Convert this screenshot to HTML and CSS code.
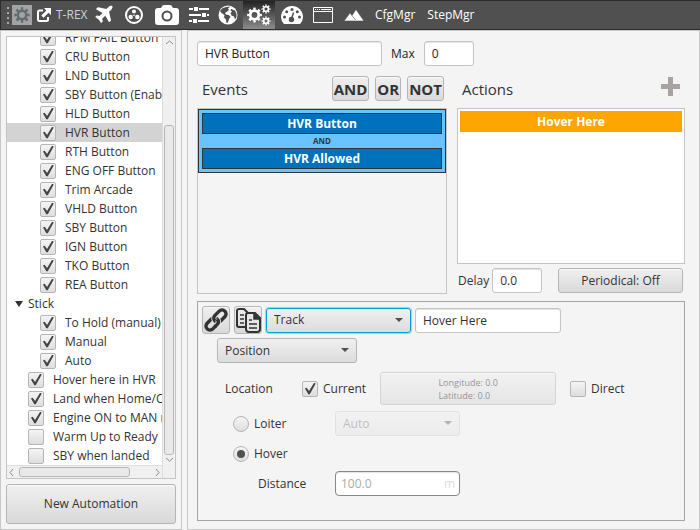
FILE: index.html
```html
<!DOCTYPE html>
<html lang="en">
<head>
<meta charset="utf-8">
<title>Automation</title>
<link rel="stylesheet" href="styles.css">
</head>
<body>
<header class="toolbar">
  <span class="grip"><i></i><i></i><i></i><i></i></span>
  <button class="tool settings" aria-label="Settings"><svg width="16" height="16" viewBox="0 0 16 16" fill="none" stroke="#5f6b70"><circle cx="8" cy="8" r="4.200" stroke-width="2.400"/><circle cx="8" cy="8" r="6.400" stroke-width="2.600" pathLength="16" stroke-dasharray="1" stroke-dashoffset=".5"/></svg></button>
  <button class="tool share" aria-label="Open"><svg width="16" height="16" viewBox="0 0 16 16"><path d="M7 3.500H3.500Q2 3.500 2 5V12.500Q2 14 3.500 14H10.500Q12 14 12 12.500V10" fill="none" stroke="#fff" stroke-width="2"/><path d="M8 1H15V8L12.500 5.700 7.500 10.700 5.300 8.500 10.300 3.500Z" fill="#fff"/></svg></button>
  <a class="brand" href="#">T-REX</a>
  <button class="tool w30" aria-label="Flight"><svg width="22" height="22" viewBox="0 0 1792 1792"><path fill="#fff" d="M1568 160q44 52 12 148t-108 172l-161 161 160 696q5 19-12 33l-128 96q-7 6-19 6-4 0-7-1-15-3-21-16l-279-508-259 259 53 194q5 17-8 31l-96 96q-9 9-23 9h-2q-15-2-24-13l-189-252-252-189q-11-7-13-23-1-13 9-25l96-97q9-9 23-9 6 0 8 1l194 53 259-259-508-279q-14-8-17-24-2-16 9-27l128-128q14-13 30-8l665 159 160-160q76-76 172-108t148 12z"/></svg></button>
  <button class="tool w30" aria-label="Controls"><svg width="20" height="20" viewBox="0 0 20 20"><circle cx="10" cy="10" r="8" fill="none" stroke="#fff" stroke-width="2"/><g fill="#fff"><circle cx="10" cy="6.500" r="2"/><circle cx="6.700" cy="12" r="2.200"/><circle cx="13.300" cy="12" r="2.200"/><circle cx="10" cy="10.300" r=".8"/></g></svg></button>
  <button class="tool w36" aria-label="Camera"><svg width="24" height="22" viewBox="0 0 24 22"><path fill="#fff" fill-rule="evenodd" d="M3 4H6L7.500 1.500Q8 1 9 1H15Q16 1 16.500 1.500L18 4H21Q24 4 24 7V18Q24 21 21 21H3Q0 21 0 18V7Q0 4 3 4ZM12 6.500A5.500 5.500 0 1 0 12 17.500A5.500 5.500 0 1 0 12 6.500Z"/><circle cx="12" cy="12" r="3.500" fill="#fff"/></svg></button>
  <button class="tool w28" aria-label="Sliders"><svg width="20" height="20" viewBox="0 0 20 20" fill="#fff"><path d="M0 3H20V5H0ZM0 9H20V11H0ZM0 15H20V17H0Z"/><path stroke="#505050" d="M4.500 1.500H9.500V6.500H4.500ZM12.500 7.500H17.500V12.500H12.500ZM3.500 13.500H8.500V18.500H3.500Z"/></svg></button>
  <button class="tool w30" aria-label="World"><svg width="20" height="20" viewBox="0 0 20 20"><circle cx="10" cy="10" r="9.500" fill="#fff"/><path fill="#505050" d="M8 2L12 1.500 10 3.500 11 5 8.500 7 7 8 8 9.500 11 10 12.500 12 11 14 10 17.500 8.500 18 8 14.500 6 12.500 6.500 10 3.500 8 2 6 4 3.500ZM13 4L17 5.500 18.500 9 18.500 12 17 14.500 16 11.500 13.500 10.500 12.500 8 14 6.500 12.500 5.500Z"/></svg></button>
  <button class="tool w32 active" aria-label="Automation"><svg width="24" height="22" viewBox="0 0 24 22" fill="none" stroke="#fff"><circle cx="7.500" cy="11" r="4.300" stroke-width="2.800"/><circle cx="7.500" cy="11" r="6.300" stroke-width="2.200" pathLength="16" stroke-dasharray="1" stroke-dashoffset=".5"/><circle cx="19" cy="5" r="2.400" stroke-width="1.700"/><circle cx="19" cy="5" r="3.800" stroke-width="1.500" pathLength="16" stroke-dasharray="1" stroke-dashoffset=".5"/><circle cx="19" cy="17" r="2.400" stroke-width="1.700"/><circle cx="19" cy="17" r="3.800" stroke-width="1.500" pathLength="16" stroke-dasharray="1" stroke-dashoffset=".5"/></svg></button>
  <button class="tool w34" aria-label="Dashboard"><svg width="22" height="20" viewBox="0 0 22 20"><path fill="#fff" d="M3 19Q0 16 0 12A11 11 0 0 1 22 12Q22 16 19 19Z"/><g fill="#505050"><circle cx="3.500" cy="12" r="1.500"/><circle cx="5.700" cy="6.700" r="1.500"/><circle cx="11" cy="4.500" r="1.500"/><circle cx="16.300" cy="6.700" r="1.500"/><circle cx="18.500" cy="12" r="1.500"/><circle cx="10.500" cy="14.500" r="2.700"/></g><path d="M10.500 14L12.500 7.500" stroke="#505050" stroke-width="1.500"/></svg></button>
  <button class="tool w28" aria-label="Window"><svg width="20" height="18" viewBox="0 0 20 18" fill="none" stroke="#fff"><path d="M.5 1.500H19.500V16.500H.5ZM.5 5.500H19.500"/><path d="M2 3.500H18" stroke-dasharray="1 1 1 1 1 1 20"/></svg></button>
  <button class="tool w34" aria-label="Terrain"><svg width="20" height="14" viewBox="0 0 20 14"><path fill="#fff" d="M0 13L6 5 8 7.500 12 1.500 20 13ZM8 7.500L11.500 12" stroke="#505050" stroke-width=".6"/></svg></button>
  <nav class="menus"><a href="#">CfgMgr</a><a href="#">StepMgr</a></nav>
</header>
<main class="split">
  <aside class="side">
    <div class="tree">
      <div class="rows">
        <label class="row deep"><input type="checkbox" class="check" checked>RPM FAIL Button</label>
        <label class="row deep"><input type="checkbox" class="check" checked>CRU Button</label>
        <label class="row deep"><input type="checkbox" class="check" checked>LND Button</label>
        <label class="row deep"><input type="checkbox" class="check" checked>SBY Button (Enabled)</label>
        <label class="row deep"><input type="checkbox" class="check" checked>HLD Button</label>
        <label class="row deep selected"><input type="checkbox" class="check" checked>HVR Button</label>
        <label class="row deep"><input type="checkbox" class="check" checked>RTH Button</label>
        <label class="row deep"><input type="checkbox" class="check" checked>ENG OFF Button</label>
        <label class="row deep"><input type="checkbox" class="check" checked>Trim Arcade</label>
        <label class="row deep"><input type="checkbox" class="check" checked>VHLD Button</label>
        <label class="row deep"><input type="checkbox" class="check" checked>SBY Button</label>
        <label class="row deep"><input type="checkbox" class="check" checked>IGN Button</label>
        <label class="row deep"><input type="checkbox" class="check" checked>TKO Button</label>
        <label class="row deep"><input type="checkbox" class="check" checked>REA Button</label>
        <div class="row group"><span class="twisty"></span>Stick</div>
        <label class="row deep"><input type="checkbox" class="check" checked>To Hold (manual)</label>
        <label class="row deep"><input type="checkbox" class="check" checked>Manual</label>
        <label class="row deep"><input type="checkbox" class="check" checked>Auto</label>
        <label class="row"><input type="checkbox" class="check" checked>Hover here in HVR</label>
        <label class="row"><input type="checkbox" class="check" checked>Land when Home/Cruise</label>
        <label class="row"><input type="checkbox" class="check" checked>Engine ON to MAN mode</label>
        <label class="row"><input type="checkbox" class="check">Warm Up to Ready</label>
        <label class="row"><input type="checkbox" class="check">SBY when landed</label>
      </div>
      <div class="vbar">
        <svg width="13" height="10" viewBox="0 0 13 10"><path d="M3 7L6.500 4 10 7"/></svg>
        <span class="vtrack"><span class="vthumb"></span></span>
        <svg width="13" height="10" viewBox="0 0 13 10"><path d="M3 3L6.500 6 10 3"/></svg>
      </div>
      <div class="hbar">
        <svg width="11" height="13" viewBox="0 0 11 13"><path d="M6 3L3 6.500 6 10"/></svg>
        <span class="htrack"><span class="hthumb"></span></span>
        <svg width="11" height="13" viewBox="0 0 11 13"><path d="M5 3L8 6.500 5 10"/></svg>
      </div>
    </div>
    <button class="btn new">New Automation</button>
  </aside>
  <section class="detail">
    <div class="namebar">
      <input class="field name" type="text" value="HVR Button" aria-label="Name">
      <label for="max">Max</label>
      <input class="field small" id="max" type="text" value="0">
    </div>
    <div class="columns">
      <section class="column">
        <div class="head"><h2>Events</h2><button class="btn logic">AND</button><button class="btn logic">OR</button><button class="btn logic">NOT</button></div>
        <div class="list">
          <div class="condition">
            <div class="event">HVR Button</div>
            <div class="joiner">AND</div>
            <div class="event">HVR Allowed</div>
          </div>
        </div>
      </section>
      <section class="column">
        <div class="head"><h2>Actions</h2><button class="plus" aria-label="Add action"><svg width="19" height="19" viewBox="0 0 19 19"><path d="M7 0H12V7H19V12H12V19H7V12H0V7H7Z" fill="#a8a2a2"/></svg></button></div>
        <div class="list actions"><div class="action">Hover Here</div></div>
        <div class="timing">
          <label for="delay">Delay</label>
          <input class="field small" id="delay" type="text" value="0.0">
          <button class="btn periodic">Periodical: Off</button>
        </div>
      </section>
    </div>
    <section class="editor">
      <div class="line">
        <button class="btn icon" aria-label="Link"><svg width="26" height="26" viewBox="0 0 26 26" fill="none"><g transform="rotate(-45 13 13)"><rect x="0.500" y="9" width="14" height="8" rx="4" stroke="#333" stroke-width="3.400"/><rect x="11.500" y="9" width="14" height="8" rx="4" stroke="#e5e5e5" stroke-width="5"/><rect x="11.500" y="9" width="14" height="8" rx="4" stroke="#333" stroke-width="3.400"/><path d="M9 17H10.500Q14.500 17 14.500 13" stroke="#e5e5e5" stroke-width="5"/><path d="M7 17H10.500Q14.500 17 14.500 13" stroke="#333" stroke-width="3.400"/></g></svg></button>
        <button class="btn icon" aria-label="Copy"><svg width="26" height="26" viewBox="0 0 26 26" fill="none" stroke="#333" stroke-width="2"><path d="M10 20H4Q2 20 2 18V4Q2 2 4 2H9L13 6V8"/><path d="M5 8H9M5 12H9M5 16H9" stroke-width="1.500"/><path fill="#e5e5e5" d="M13 6H20L25 11V22Q25 25 22 25H14Q11 25 11 22V8Q11 6 13 6Z"/><path d="M19 6V12H25" fill="#333" stroke-width="1.500"/><path d="M14 13H17M14 17H22M14 21H22" stroke-width="1.500"/></svg></button>
        <span class="select track"><select aria-label="Action type"><option>Track</option></select></span>
        <input class="field title" type="text" value="Hover Here" aria-label="Action name">
      </div>
      <div class="line indent"><span class="select position"><select aria-label="Target"><option>Position</option></select></span></div>
      <div class="line location">
        <span class="caption">Location</span>
        <label class="option"><input type="checkbox" class="check" checked>Current</label>
        <button class="btn coords" disabled><span>Longitude: 0.0<br>Latitude: 0.0</span></button>
        <label class="option"><input type="checkbox" class="check">Direct</label>
      </div>
      <div class="mode">
        <label class="option"><input type="radio" class="radio" name="mode">Loiter</label>
        <span class="select disabled"><select aria-label="Loiter direction" disabled><option>Auto</option></select></span>
        <label class="option"><input type="radio" class="radio" name="mode" checked>Hover</label>
        <span></span>
        <label class="distance" for="distance">Distance</label>
        <span class="unit"><input class="field faded" id="distance" type="text" value="100.0" disabled><em>m</em></span>
      </div>
    </section>
  </section>
</main>
</body>
</html>
```
FILE: styles.css
```css
* { box-sizing: border-box; }
body {
  margin: 0;
  min-height: 100vh;
  display: flex;
  flex-direction: column;
  background: #f4f4f4;
  color: #333;
  font: 12px/16px "Open Sans", "Noto Sans", sans-serif;
}
button, input, select { font: inherit; color: inherit; margin: 0; }
button { padding: 0; }
svg { display: block; flex: none; }

.toolbar {
  display: flex;
  align-items: center;
  height: 30px;
  border: solid #2c2c2c;
  border-width: 1px 0 1px 1px;
  background: #505050;
}
.grip { display: grid; gap: 3px; padding: 0 3px 0 6px; }
.grip i { width: 2px; height: 2px; background: #aaa; }
.tool {
  display: flex;
  align-items: center;
  justify-content: center;
  height: 100%;
  border: 0;
  background: none;
}
.tool.settings { width: 20px; height: 20px; background: #a3a3a3; }
.share { width: 24px; }
.w28 { width: 28px; }
.w30 { width: 30px; }
.w32 { width: 32px; }
.w34 { width: 34px; }
.w36 { width: 36px; }
.active { background: linear-gradient(#222, #8c8c8c); }
.toolbar a { color: #fff; text-decoration: none; }
.toolbar .brand { width: 33px; color: #c5d5df; font-size: 12px; white-space: nowrap; }
.menus { display: flex; gap: 12px; padding-left: 4px; }

.split { flex: 1; display: grid; grid-template-columns: 182px 1fr; gap: 5px; }
.side {
  display: flex;
  flex-direction: column;
  gap: 5px;
  min-width: 0;
  padding: 5px;
  border: 1px solid #c8c8c8;
}
.tree {
  flex: 1;
  display: grid;
  grid-template-columns: minmax(0, 1fr) 13px;
  grid-template-rows: 428px 13px;
  border: 1px solid #c4c4c4;
  background: #fff;
}
.rows {
  display: flex;
  flex-direction: column;
  justify-content: flex-end;
  overflow: hidden;
}
.row {
  flex: none;
  display: flex;
  align-items: center;
  gap: 9px;
  height: 19px;
  padding-left: 21px;
  white-space: nowrap;
}
.row.deep { padding-left: 33px; }
.row.group { padding-left: 8px; gap: 5px; }
.selected { background: #d3d3d3; }
.twisty { border: 4px solid transparent; border-top: 6px solid #333; border-bottom: 0; }

.check, .radio {
  appearance: none;
  flex: none;
  display: grid;
  place-items: center;
  width: 16px;
  height: 16px;
  border: 1px solid #b5b5b5;
  border-radius: 2px;
  background: linear-gradient(#f4f4f4, #dedede);
}
.check:checked::after {
  content: "";
  width: 12px;
  height: 12px;
  background: #444;
  clip-path: polygon(8% 50%, 22% 44%, 42% 70%, 84% 2%, 98% 8%, 48% 98%, 36% 98%);
}
.radio { border-radius: 50%; }
.radio:checked::after { content: ""; width: 8px; height: 8px; border-radius: 50%; background: #505050; }

.vbar, .hbar { display: flex; align-items: center; background: #f0f0f0; }
.vbar { flex-direction: column; grid-row: 1 / 3; border-left: 1px solid #ddd; padding-bottom: 13px; }
.hbar { grid-row: 2; grid-column: 1; border-top: 1px solid #ddd; }
.vbar svg, .hbar svg { fill: none; stroke: #8c8c8c; }
.vtrack { flex: 1; display: flex; flex-direction: column; justify-content: flex-end; }
.vthumb, .hthumb { border: 1px solid #b5b5b5; border-radius: 3px; background: #e9e9e9; }
.vthumb { width: 10px; height: 81%; }
.htrack { flex: 1; padding-left: 1px; }
.hthumb { display: block; width: 84%; height: 10px; }

.btn {
  border: 1px solid #b5b5b5;
  border-radius: 3px;
  background: linear-gradient(#f0f0f0, #d9d9d9);
  box-shadow: inset 0 1px #fafafa;
}
.new { height: 40px; }

.detail {
  display: flex;
  flex-direction: column;
  gap: 7px;
  min-width: 0;
  padding: 10px 14px 8px 9px;
  border: 1px solid #c8c8c8;
}
.namebar { display: flex; align-items: center; gap: 9px; color: #222; }
.field {
  width: 100%;
  min-width: 0;
  height: 25px;
  padding: 0 7px;
  border: 1px solid #c4c4c4;
  border-radius: 3px;
  background: #fff;
  box-shadow: inset 0 1px 1px #e4e4e4;
}
.name { width: 185px; }
.small { width: 50px; }
.columns { display: grid; grid-template-columns: 250fr 228fr; gap: 10px; padding-top: 3px; }
.column { display: flex; flex-direction: column; gap: 7px; min-width: 0; }
.head { display: flex; align-items: center; gap: 6px; height: 25px; padding: 0 3px 0 5px; }
h2 { flex: 1; margin: 0; font-size: 15px; line-height: 20px; font-weight: 400; }
.logic { height: 25px; padding: 0 1px; font-size: 15px; font-weight: 700; }
.plus { align-self: flex-start; border: 0; background: none; padding: 1px 2px; }
.list { flex: 1; min-height: 156px; border: 1px solid #c4c4c4; }
.actions { flex: none; padding: 2px; background: #fff; }
.condition { padding: 3px; border: 1px solid #333; background: #68c3ff; }
.event, .action { color: #fff; text-align: center; font-weight: 700; }
.event { height: 21px; line-height: 19px; border: 1px solid #333; background: #0072bc; }
.joiner { font-size: 8px; font-weight: 700; line-height: 14px; text-align: center; }
.action { height: 21px; line-height: 21px; background: #ffa500; }
.timing { display: flex; align-items: center; gap: 3px; margin-top: -3px; padding: 0 2px 1px 1px; }
.periodic { width: 125px; height: 25px; margin-left: auto; }

.editor {
  flex: 1;
  display: flex;
  flex-direction: column;
  gap: 4px;
  padding: 4px;
  border: 1px solid #a5a5a5;
}
.line { display: flex; align-items: center; gap: 4px; }
.indent { padding-left: 15px; }
.icon { display: grid; place-items: center; width: 28px; height: 28px; }
.select { position: relative; display: block; height: 25px; }
.select::after {
  content: "";
  position: absolute;
  right: 8px;
  top: 10px;
  border: 4px solid transparent;
  border-top-color: #505050;
  border-bottom: 0;
  pointer-events: none;
}
select {
  appearance: none;
  width: 100%;
  height: 25px;
  padding: 0 7px;
  border: 1px solid #b5b5b5;
  border-radius: 3px;
  background: linear-gradient(#f0f0f0, #dcdcdc);
}
.track { width: 145px; }
.track select { border-color: #039ed3; box-shadow: 0 0 1px 1px #9bd5ea; }
.title { width: 146px; }
.position { width: 140px; }
.location { gap: 14px; padding: 5px 0 2px 23px; }
.caption { width: 63px; }
.option { display: flex; align-items: center; gap: 5px; }
.coords {
  display: grid;
  place-items: center;
  width: 176px;
  height: 33px;
  font-size: 9px;
  line-height: 13px;
  text-align: left;
}
.coords:disabled { opacity: .5; }
.disabled { opacity: .4; }
.mode {
  display: grid;
  grid-template-columns: 102px 125px;
  grid-auto-rows: 25px;
  gap: 5px 0;
  align-items: center;
  padding-left: 31px;
}
.distance { padding-left: 25px; }
.unit { position: relative; }
.faded { padding: 0 5px; border-color: #888; border-radius: 4px; color: #aaa; }
.unit em { position: absolute; right: 5px; top: 5px; font-style: normal; color: #ddd; }
```
